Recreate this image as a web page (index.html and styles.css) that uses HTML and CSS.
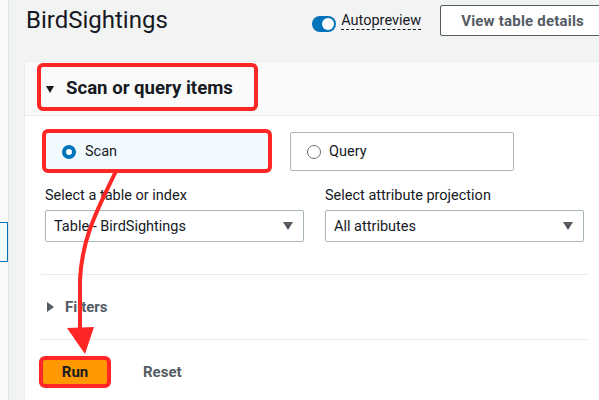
FILE: index.html
```html
<!DOCTYPE html>
<html lang="en">
<head>
<meta charset="utf-8">
<title>BirdSightings</title>
<link rel="stylesheet" href="styles.css">
</head>
<body>
<div class="page">
  <nav class="sidenav"><div class="nav-item"></div></nav>
  <main class="main">
    <header class="topbar">
      <h1 class="title">BirdSightings</h1>
      <div class="actions">
        <label class="toggle">
          <span class="switch"><span class="knob"></span></span>
          <span class="toggle-label">Autopreview</span>
        </label>
        <button class="btn-normal">View table details</button>
      </div>
    </header>
    <section class="panel">
      <div class="panel-header">
        <div class="hl hl-header">
          <span class="caret-down"></span>
          <h2 class="panel-title">Scan or query items</h2>
        </div>
      </div>
      <div class="panel-body">
        <div class="tiles">
          <div class="tile tile-selected"><span class="radio radio-on"></span>Scan</div>
          <div class="tile"><span class="radio"></span>Query</div>
        </div>
        <div class="fields">
          <div class="field">
            <div class="label">Select a table or index</div>
            <div class="select"><span>Table - BirdSightings</span><span class="select-caret"></span></div>
          </div>
          <div class="field">
            <div class="label">Select attribute projection</div>
            <div class="select"><span>All attributes</span><span class="select-caret"></span></div>
          </div>
        </div>
        <div class="divider"></div>
        <div class="filters"><span class="caret-right"></span>Filters</div>
        <div class="divider"></div>
        <div class="buttons">
          <button class="btn-primary">Run</button>
          <button class="btn-link">Reset</button>
        </div>
      </div>
    </section>
  </main>
  <svg class="annot-arrow" width="599" height="400" viewBox="0 0 599 400">
    <path d="M116,171 C100,205 82,235 80,280 L80,332" fill="none" stroke="#ff2626" stroke-width="4"/>
    <polygon points="67,328 94,327 85,354" fill="#ff2626"/>
  </svg>
</div>
</body>
</html>
```

FILE: styles.css
```css
* { box-sizing: border-box; }
html, body { margin: 0; padding: 0; }
body {
  background: #f2f3f3;
  font-family: Roboto, "Liberation Sans", sans-serif;
  color: #16191f;
  overflow: hidden;
  width: 599px;
  height: 400px;
}
.page {
  position: relative;
  display: flex;
  width: 612px;
  height: 400px;
}
.sidenav {
  width: 9px;
  flex: none;
  background: #fafafa;
  border-right: 1px solid #dfe2e2;
  padding-top: 222px;
}
.nav-item {
  height: 40px;
  width: 8px;
  background: #f1faff;
  border: 1px solid #0073bb;
  border-left: none;
}
.main {
  flex: 1;
  padding: 0 4px 0 15px;
  display: flex;
  flex-direction: column;
}
.topbar {
  height: 61px;
  display: flex;
  align-items: flex-start;
  padding: 4px 0 0 2px;
}
.title {
  margin: 0;
  font-size: 24px;
  line-height: 32px;
  font-weight: 400;
  color: #16191f;
}
.actions {
  margin-left: auto;
  margin-top: 1px;
  height: 31px;
  display: flex;
  align-items: stretch;
  margin-right: 3px;
}
.toggle {
  display: flex;
  align-items: flex-start;
  padding-top: 6px;
  margin-right: 19px;
}
.switch {
  width: 24px;
  height: 16px;
  border-radius: 8px;
  background: #0073bb;
  margin-top: 5px;
  margin-right: 5px;
  display: flex;
  align-items: center;
  justify-content: flex-end;
  padding-right: 2px;
}
.knob {
  width: 12px;
  height: 12px;
  border-radius: 50%;
  background: #fff;
}
.toggle-label {
  font-size: 14.5px;
  line-height: 20px;
  color: #16191f;
  text-decoration: underline dashed #16191f;
  text-decoration-thickness: 1px;
  text-underline-offset: 4px;
}
.btn-normal {
  font-family: inherit;
  font-size: 15px;
  letter-spacing: 0.2px;
  font-weight: 700;
  color: #545b64;
  background: #fff;
  border: 1px solid #545b64;
  border-radius: 2px;
  padding: 0 20px;
  height: 31px;
}
.panel {
  flex: 1;
  background: #fff;
  border-top: 1px solid #eaeded;
  border-left: 1px solid #eaeded;
}
.panel-header {
  height: 54px;
  background: #fafafa;
  border-bottom: 1px solid #eaeded;
  padding: 1px 0 0 12px;
}
.hl {
  border: 4px solid #ff2626;
  border-radius: 6px;
}
.hl-header {
  display: inline-flex;
  align-items: center;
  width: 221px;
  height: 48px;
  padding-left: 5px;
  padding-top: 2px;
}
.caret-down {
  width: 0;
  height: 0;
  border-left: 4px solid transparent;
  border-right: 4px solid transparent;
  border-top: 7px solid #16191f;
  margin-right: 12px;
  margin-top: 2px;
}
.panel-title {
  margin: 0;
  font-size: 18.6px;
  line-height: 22px;
  font-weight: 700;
  color: #16191f;
}
.panel-body {
  padding: 13px 24px 0 20px;
}
.tiles {
  display: flex;
  align-items: center;
}
.tile {
  display: flex;
  align-items: center;
  width: 224px;
  height: 39px;
  border: 1px solid #aab7b8;
  border-radius: 2px;
  padding-left: 16px;
  padding-top: 1px;
  font-size: 14.5px;
  color: #16191f;
}
.tile-selected {
  width: 230px;
  height: 44px;
  margin-left: -3px;
  margin-right: 18px;
  border: 4px solid #ff2626;
  border-radius: 6px;
  background: #f1faff;
  padding-left: 16px;
}
.radio {
  width: 14px;
  height: 14px;
  border-radius: 50%;
  border: 1px solid #687078;
  margin-right: 8px;
  background: #fff;
}
.radio-on {
  border: 4px solid #0073bb;
  margin-right: 9px;
}
.fields {
  display: grid;
  grid-template-columns: 259px 259px;
  column-gap: 21px;
  margin-top: 13px;
}
.label {
  font-size: 14.5px;
  line-height: 20px;
  color: #16191f;
}
.select {
  margin-top: 4px;
  height: 32px;
  border: 1px solid #aab7b8;
  border-radius: 2px;
  display: flex;
  align-items: center;
  justify-content: space-between;
  padding: 0 10px 0 8px;
  font-size: 14.5px;
  color: #16191f;
}
.select-caret {
  width: 0;
  height: 0;
  border-left: 5px solid transparent;
  border-right: 5px solid transparent;
  border-top: 8px solid #545b64;
}
.divider {
  height: 1px;
  background: #eaeded;
  margin: 32px -4px 0 -4px;
}
.filters + .divider { margin-top: 0; }
.filters {
  height: 64px;
  display: flex;
  align-items: center;
  font-size: 15px;
  font-weight: 700;
  color: #545b64;
  padding-left: 2px;
}
.caret-right {
  width: 0;
  height: 0;
  border-top: 5px solid transparent;
  border-bottom: 5px solid transparent;
  border-left: 7px solid #545b64;
  margin-right: 11px;
}
.buttons {
  display: flex;
  align-items: center;
  margin-top: 16px;
}
.btn-primary {
  font-family: inherit;
  width: 72px;
  height: 32px;
  margin-left: -6px;
  background: #ff9900;
  border: 4px solid #ff2626;
  border-radius: 6px;
  font-size: 15px;
  font-weight: 700;
  color: #16191f;
  padding: 0;
}
.btn-link {
  font-family: inherit;
  background: none;
  border: none;
  padding: 0;
  margin-left: 32px;
  font-size: 15px;
  font-weight: 700;
  color: #545b64;
}
.annot-arrow {
  position: absolute;
  left: 0;
  top: 0;
  pointer-events: none;
}
```
